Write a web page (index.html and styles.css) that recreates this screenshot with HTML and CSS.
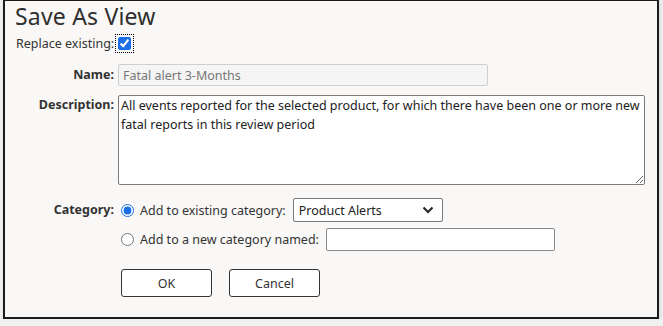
FILE: index.html
```html
<!DOCTYPE html>
<html lang="en">
<head>
    <meta charset="UTF-8">
    <title>Save As View</title>
    <link rel="stylesheet" href="styles.css">
</head>
<body>
    <div class="dialog">
        <h1 class="title">Save As View</h1>

        <div class="replace-row">
            <label for="replace">Replace existing:</label>
            <input type="checkbox" id="replace" class="check" checked>
        </div>

        <div class="form">
            <label class="field-label" for="name">Name:</label>
            <div class="field">
                <input type="text" id="name" class="name-input" value="Fatal alert 3-Months" disabled>
            </div>

            <label class="field-label desc-label" for="desc">Description:</label>
            <div class="field">
                <textarea id="desc" class="desc">All events reported for the selected product, for which there have been one or more new fatal reports in this review period</textarea>
            </div>

            <label class="field-label cat-label">Category:</label>
            <div class="field cat-options">
                <div class="cat-row">
                    <input type="radio" name="cat" id="cat-existing" class="radio" checked>
                    <label for="cat-existing">Add to existing category:</label>
                    <div class="select-box">
                        <span>Product Alerts</span>
                        <svg width="12" height="8" viewBox="0 0 12 8">
                            <path d="M1.5 1.5 L6 6 L10.5 1.5" fill="none" stroke="#222" stroke-width="2"/>
                        </svg>
                    </div>
                </div>
                <div class="cat-row">
                    <input type="radio" name="cat" id="cat-new" class="radio">
                    <label for="cat-new">Add to a new category named:</label>
                    <input type="text" class="new-cat">
                </div>
            </div>

            <div></div>
            <div class="buttons">
                <button class="btn">OK</button>
                <button class="btn">Cancel</button>
            </div>
        </div>
    </div>
</body>
</html>
```

FILE: styles.css
```css
* {
    margin: 0;
    padding: 0;
    box-sizing: border-box;
}

body {
    background-color: #f1f1f1;
    font-family: "Noto Sans", "Open Sans", sans-serif;
    font-size: 12.5px;
    color: #333;
}

.dialog {
    margin-left: 3px;
    width: 656px;
    height: 320px;
    margin-top: -1px;
    background-color: #f9f8f6;
    border: 2px solid #1c1c1c;
    box-shadow: 1px 1px 5px rgba(0, 0, 0, 0.12);
    padding: 0 10px;
}

.title {
    font-size: 23px;
    font-weight: 400;
    color: #2f2f2f;
    line-height: 30px;
    letter-spacing: 0.2px;
}

.replace-row {
    display: flex;
    align-items: center;
    margin-top: 2px;
    height: 20px;
    padding-left: 1px;
}

.check {
    width: 13px;
    height: 13px;
    margin: 0 0 0 4px;
    accent-color: #1a6fe6;
    outline: 1px dotted #000;
    outline-offset: 2px;
}

.form {
    display: grid;
    grid-template-columns: 99px 1fr;
    column-gap: 4px;
    margin-top: 11px;
}

.field-label {
    text-align: right;
    font-weight: 700;
    line-height: 22px;
}

.field {
    margin-bottom: 9px;
}

.name-input {
    width: 370px;
    height: 22px;
    border: 1px solid #cfcfcf;
    border-radius: 2px;
    background-color: #f5f5f5;
    color: #777;
    font: inherit;
    padding: 0 4px;
}

.desc {
    display: block;
    width: 527px;
    height: 90px;
    border: 1px solid #7a7a7a;
    border-radius: 2px;
    background-color: #fff;
    color: #222;
    font: inherit;
    line-height: 19px;
    padding: 0 2px;
    resize: both;
}

.desc-label {
    line-height: 20px;
}

.cat-label {
    line-height: 24px;
    margin-top: 4px;
}

.cat-options {
    margin-top: 4px;
    margin-bottom: 0;
}

.cat-row {
    display: flex;
    align-items: center;
    height: 24px;
    margin-bottom: 5px;
}

.radio {
    width: 13px;
    height: 13px;
    margin: 0 6px 0 3px;
    accent-color: #1a6fe6;
}

.select-box {
    display: flex;
    align-items: center;
    justify-content: space-between;
    width: 150px;
    height: 24px;
    margin-left: 7px;
    border: 1px solid #7a7a7a;
    border-radius: 2px;
    background-color: #fff;
    padding: 0 8px 0 5px;
    color: #222;
}

.new-cat {
    width: 229px;
    height: 23px;
    margin-left: 7px;
    border: 1px solid #8a8a8a;
    border-radius: 2px;
    background-color: #fff;
    font: inherit;
}

.buttons {
    display: flex;
    gap: 17px;
    margin-top: 13px;
    margin-left: 3px;
}

.btn {
    width: 91px;
    height: 28px;
    border: 1px solid #333;
    border-radius: 3px;
    background-color: #fff;
    color: #333;
    font: inherit;
    cursor: pointer;
}
```
